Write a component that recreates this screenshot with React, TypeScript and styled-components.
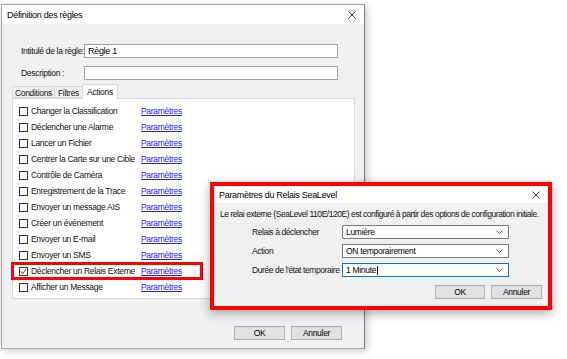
import React from "react";
import styled, { createGlobalStyle } from "styled-components";

const GlobalStyle = createGlobalStyle`
  html, body {
    margin: 0;
    padding: 0;
    background: #ffffff;
  }
  body {
    font-family: "Liberation Sans", Arial, sans-serif;
    font-size: 8.5px;
    letter-spacing: -0.3px;
    color: #111;
  }
`;

const Desktop = styled.div`
  position: relative;
  width: 567px;
  height: 359px;
  overflow: hidden;
  background: #ffffff;
`;

const Window = styled.div`
  position: absolute;
  left: 1px;
  top: 4px;
  width: 364px;
  height: 345px;
  box-sizing: border-box;
  background: #f0f0f0;
  border: 1px solid #a8a8a8;
  border-right-color: #7a7a7a;
  box-shadow: 2px 2px 8px rgba(0, 0, 0, 0.22);
  display: flex;
  flex-direction: column;
`;

const TitleBar = styled.div<{ $h: number }>`
  height: ${(p) => p.$h}px;
  flex: none;
  background: #ffffff;
  display: flex;
  align-items: center;
  justify-content: space-between;
  padding: 0 8px 0 5px;
  font-size: 9px;
  color: #000;
`;

const CloseIcon = () => (
  <svg width="8" height="8" viewBox="0 0 8 8">
    <path d="M0.5 0.5 L7.5 7.5 M7.5 0.5 L0.5 7.5" stroke="#222" strokeWidth="0.9" />
  </svg>
);

const Body = styled.div`
  flex: 1;
  display: flex;
  flex-direction: column;
  padding-top: 20px;
`;

const Form = styled.div`
  display: grid;
  grid-template-columns: 63px 254px;
  row-gap: 8px;
  margin-left: 19px;
  align-items: center;
`;

const Label = styled.span`
  white-space: nowrap;
`;

const TextInput = styled.div`
  height: 14px;
  box-sizing: border-box;
  background: #fff;
  border: 1px solid #a0a0a0;
  display: flex;
  align-items: center;
  padding-left: 3px;
  font-size: 9px;
  color: #000;
`;

const TabArea = styled.div`
  margin: 4px 0 0 10px;
  width: 343px;
`;

const TabStrip = styled.div`
  display: flex;
  align-items: flex-end;
  height: 14px;
  padding-left: 1px;
`;

const Tab = styled.div<{ $active?: boolean; $w: number }>`
  width: ${(p) => p.$w}px;
  height: ${(p) => (p.$active ? 15 : 12)}px;
  box-sizing: border-box;
  display: flex;
  align-items: center;
  justify-content: center;
  background: ${(p) => (p.$active ? "#ffffff" : "#f0f0f0")};
  border: 1px solid #d9d9d9;
  border-bottom: ${(p) => (p.$active ? "none" : "1px solid #d9d9d9")};
  margin-bottom: ${(p) => (p.$active ? "-1px" : "0")};
  margin-left: -1px;
  position: relative;
  z-index: ${(p) => (p.$active ? 1 : 0)};
  padding-top: ${(p) => (p.$active ? "0" : "1px")};
`;

const Panel = styled.div`
  height: 201px;
  box-sizing: border-box;
  background: #ffffff;
  border: 1px solid #d9d9d9;
  padding-top: 4px;
`;

const ActionRow = styled.div<{ $highlight?: boolean }>`
  position: relative;
  height: 16px;
  display: grid;
  grid-template-columns: 9px 107px auto;
  column-gap: 3px;
  align-items: center;
  padding-left: 6px;

  &::after {
    content: "";
    display: ${(p) => (p.$highlight ? "block" : "none")};
    position: absolute;
    left: -2px;
    top: -1px;
    width: 192px;
    height: 18px;
    box-sizing: border-box;
    border: 3px solid #ff0000;
  }
`;

const Box = styled.span`
  width: 9px;
  height: 9px;
  box-sizing: border-box;
  border: 1px solid #333;
  background: #fff;
  display: flex;
  align-items: center;
  justify-content: center;
`;

const Link = styled.span`
  color: #2020ff;
  text-decoration: underline;
  white-space: nowrap;
`;

const ButtonBar = styled.div<{ $top: number; $right: number }>`
  display: flex;
  justify-content: flex-end;
  gap: 6px;
  margin-top: ${(p) => p.$top}px;
  padding-right: ${(p) => p.$right}px;
`;

const Button = styled.div<{ $w: number }>`
  width: ${(p) => p.$w}px;
  height: 14px;
  box-sizing: border-box;
  background: #e1e1e1;
  border: 1px solid #adadad;
  display: flex;
  align-items: center;
  justify-content: center;
  color: #000;
`;

const Check = () => (
  <svg width="7" height="7" viewBox="0 0 8 8">
    <polyline points="1,4 3,6.5 7,1" fill="none" stroke="#222" strokeWidth="1" />
  </svg>
);

const Frame = styled.div`
  position: absolute;
  left: 210px;
  top: 182px;
  width: 342px;
  height: 128px;
  box-sizing: border-box;
  border: 4px solid #ff0000;
  box-shadow: 0 3px 10px rgba(0, 0, 0, 0.35);
  background: #f0f0f0;
  display: flex;
  flex-direction: column;
`;

const DialogBody = styled.div`
  flex: 1;
  display: flex;
  flex-direction: column;
  padding: 6px 0 0 6px;
`;

const Note = styled.div`
  height: 10px;
  line-height: 10px;
  white-space: nowrap;
  letter-spacing: -0.45px;
`;

const SelectGrid = styled.div`
  display: grid;
  grid-template-columns: 90px 167px;
  row-gap: 5px;
  margin: 6px 0 0 32px;
  align-items: center;
  letter-spacing: -0.4px;
`;

const Select = styled.div<{ $focus?: boolean }>`
  height: 14px;
  box-sizing: border-box;
  background: #fff;
  border: 1px solid ${(p) => (p.$focus ? "#0078d7" : "#7a7a7a")};
  display: flex;
  align-items: center;
  justify-content: space-between;
  padding: 0 5px 0 3px;
  color: #000;
  letter-spacing: -0.3px;
`;

const Caret = styled.span`
  width: 1px;
  height: 9px;
  background: #000;
  display: inline-block;
  vertical-align: middle;
  margin-left: 1px;
`;

const Chevron = () => (
  <svg width="7" height="4" viewBox="0 0 7 4">
    <polyline points="0.5,0.5 3.5,3.5 6.5,0.5" fill="none" stroke="#555" strokeWidth="0.9" />
  </svg>
);

const actions = [
  "Changer la Classification",
  "Déclencher une Alarme",
  "Lancer un Fichier",
  "Centrer la Carte sur une Cible",
  "Contrôle de Caméra",
  "Enregistrement de la Trace",
  "Envoyer un message AIS",
  "Créer un événement",
  "Envoyer un E-mail",
  "Envoyer un SMS",
  "Déclencher un Relais Externe",
  "Afficher un Message",
];

const App = () => (
  <>
    <GlobalStyle />
    <Desktop>
      <Window>
        <TitleBar $h={19}>
          <span>Définition des règles</span>
          <CloseIcon />
        </TitleBar>
        <Body>
          <Form>
            <Label>Intitulé de la règle:</Label>
            <TextInput>Règle 1</TextInput>
            <Label>Description :</Label>
            <TextInput />
          </Form>
          <TabArea>
            <TabStrip>
              <Tab $w={43}>Conditions</Tab>
              <Tab $w={29}>Filtres</Tab>
              <Tab $w={36} $active>
                Actions
              </Tab>
            </TabStrip>
            <Panel>
              {actions.map((a, i) => (
                <ActionRow key={a} $highlight={i === 10}>
                  <Box>{i === 10 && <Check />}</Box>
                  <Label>{a}</Label>
                  <Link>Paramètres</Link>
                </ActionRow>
              ))}
            </Panel>
          </TabArea>
          <ButtonBar $top={27} $right={22}>
            <Button $w={51}>OK</Button>
            <Button $w={51}>Annuler</Button>
          </ButtonBar>
        </Body>
      </Window>

      <Frame>
        <TitleBar $h={17}>
          <span>Paramètres du Relais SeaLevel</span>
          <CloseIcon />
        </TitleBar>
        <DialogBody>
          <Note>
            Le relai externe (SeaLevel 110E/120E) est configuré à partir des options de configuration initiale.
          </Note>
          <SelectGrid>
            <Label>Relais à déclencher</Label>
            <Select>
              <span>Lumière</span>
              <Chevron />
            </Select>
            <Label>Action</Label>
            <Select>
              <span>ON temporairement</span>
              <Chevron />
            </Select>
            <Label>Durée de l'état temporaire</Label>
            <Select $focus>
              <span>
                1 Minute
                <Caret />
              </span>
              <Chevron />
            </Select>
          </SelectGrid>
          <ButtonBar $top={8} $right={6}>
            <Button $w={50}>OK</Button>
            <Button $w={51}>Annuler</Button>
          </ButtonBar>
        </DialogBody>
      </Frame>
    </Desktop>
  </>
);

export default App;
